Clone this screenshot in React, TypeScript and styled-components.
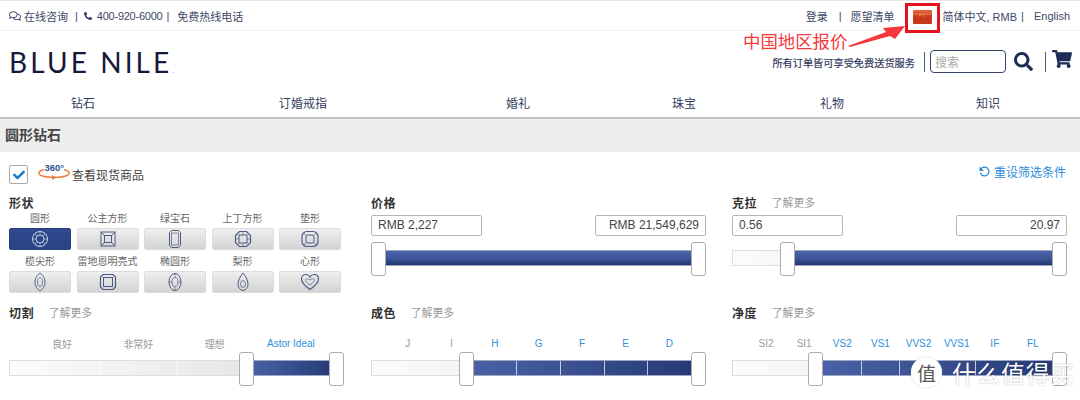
import React from 'react';
import styled, { createGlobalStyle } from 'styled-components';
import { FaPhoneAlt, FaSearch, FaShoppingCart, FaCheck, FaRegComments } from 'react-icons/fa';
import { MdRefresh } from 'react-icons/md';

const Global = createGlobalStyle`
  html, body { margin: 0; padding: 0; background: #fff; overflow: hidden; }
  body { font-family: "Liberation Sans", "Noto Sans CJK SC", sans-serif; color: #333; }
  * { box-sizing: border-box; }
`;
const Page = styled.div`position: relative; width: 1080px; height: 400px; overflow: hidden; border-top: 1px solid #e8e8e8;`;

const TopBar = styled.div`
  height: 30px; display: flex; align-items: center; justify-content: space-between;
  padding: 1px 10px 0 9px; border-bottom: 1px solid #f0f0f0; font-size: 11px; color: #3d4766;
`;
const TopGroup = styled.div`display: flex; align-items: center;`;
const TopText = styled.span<{ $ml?: number; $tight?: boolean }>`
  margin-left: ${p => p.$ml ?? 0}px; white-space: nowrap; display: inline-flex; align-items: center;
  letter-spacing: ${p => p.$tight ? '-0.25px' : '0'};
`;
const FlagSlot = styled.span`width: 19px; height: 13px; margin: 0 11px 0 18px; display: block;`;

const BrandRow = styled.div`height: 57px; display: flex; align-items: center; padding: 4px 8px 0 9px;`;
const Logo = styled.div`
  font-family: "Lato", "Liberation Sans", sans-serif; font-weight: 400; font-size: 28px; letter-spacing: 3.1px;
  color: #16193a; line-height: 1; white-space: nowrap;
  small { font-size: 6px; letter-spacing: 0; color: #777; }
`;
const BrandRight = styled.div`margin-left: auto; display: flex; align-items: center; color: #1d2b55;`;
const Tagline = styled.span`font-size: 10.2px; color: #333c5e; -webkit-text-stroke: 0.2px #333c5e; white-space: nowrap; margin-top: 1px;`;
const VRule = styled.span<{ $ml: number; $mr: number }>`width: 1px; height: 20px; background: #555e78; margin: 0 ${p => p.$mr}px 0 ${p => p.$ml}px;`;
const SearchBox = styled.div`
  width: 76px; height: 23px; border: 1px solid #34426e; border-radius: 4px; font-size: 12px; color: #aaa;
  padding: 0 0 0 4px; display: flex; align-items: center;
`;

const Nav = styled.nav`
  width: 1084px; height: 29px; display: grid; grid-template-columns: 166px 274px 156px 176px 120px 192px;
  align-items: center; font-size: 12px; letter-spacing: 0.1px; color: #333e60;
`;
const NavItem = styled.span`text-align: center;`;

const TitleBar = styled.div`
  height: 35px; background: #eeeeee; border-top: 2px solid #c4c4c4; padding: 4px 5px 0;
  font-size: 14px; font-weight: 700; color: #444; line-height: 24px;
`;
const Main = styled.div`padding: 0 13px 0 9px;`;
const StockRow = styled.div`height: 41px; display: flex; align-items: center; justify-content: space-between; padding-top: 4px;`;
const StockLeft = styled.div`display: flex; align-items: center; font-size: 12px; color: #444;`;
const Check = styled.span`
  width: 19px; height: 19px; border: 1px solid #a9a9a9; border-radius: 2px; display: flex; align-items: center; justify-content: center;
  color: #1479c9; font-size: 12px; margin-right: 9px;
`;
const Reset = styled.a`font-size: 12px; color: #2b8bd6; display: flex; align-items: center; gap: 2px; margin: 0 1px 7px 0;`;

const Grid = styled.div`display: grid; grid-template-columns: 362px 361px 335px; grid-template-rows: 110px 100px;`;
const Cell = styled.section`width: 335px; position: relative;`;
const Heading = styled.div`height: 18px; display: flex; align-items: center; font-size: 12px; color: #333;`;
const HeadTitle = styled.b`font-weight: 700; margin-right: 15px; letter-spacing: 0.4px;`;
const More = styled.span`font-size: 10.8px; color: #999;`;

const ShapeGrid = styled.div`display: grid; grid-template-columns: 62px 62px 62px 62px 62px; column-gap: 5.5px; width: 331px;`;
const ShapeCol = styled.div`display: flex; flex-direction: column; align-items: center; height: 43px;`;
const ShapeLabel = styled.span`height: 17px; line-height: 16px; font-size: 10px; color: #666; white-space: nowrap;`;
const ShapeBtn = styled.div<{ $on?: boolean }>`
  width: 100%; height: 22px; border-radius: 2px; display: flex; align-items: center; justify-content: center;
  background: ${p => p.$on ? 'linear-gradient(#2e4a90, #2b4285)' : 'linear-gradient(#efefef, #d3d3d3)'};
  border: 1px solid ${p => p.$on ? '#2a3f7d' : '#dcdcdc'};
`;

const Inputs = styled.div`display: flex; justify-content: space-between; margin-top: 4px;`;
const NumInput = styled.div<{ $right?: boolean }>`
  width: 111px; height: 21px; border: 1px solid #b5b5b5; border-radius: 2px; font-size: 12px; line-height: 19px; color: #444;
  padding: 0 6px; text-align: ${p => p.$right ? 'right' : 'left'}; white-space: nowrap;
`;
const Labels = styled.div`display: flex; padding: 0 15px; height: 18px; margin-top: 13px; align-items: center;`;
const Lbl = styled.span<{ $on?: boolean }>`flex: 1; text-align: center; font-size: 10px; color: ${p => p.$on ? '#2f8fd9' : '#9a9a9a'}; white-space: nowrap;`;

const Slider = styled.div<{ $top: number }>`position: relative; height: 34px; width: 335px; margin-top: ${p => p.$top}px;`;
const Track = styled.div`position: absolute; left: 0; right: 1px; top: 8px; height: 16px; border: 1px solid #dedede;
  background: linear-gradient(90deg, #fcfcfc, #e6e6e6 72%);`;
const Fill = styled.div<{ $mode: 'v' | 'h' }>`
  position: absolute; top: 8px; height: 16px; border: 1px solid #9ea7c0; border-width: 1px 0;
  background: ${p => p.$mode === 'v' ? 'linear-gradient(#4a63a8, #3c5599 55%, #22356f)' : 'linear-gradient(90deg, #4b62a8, #253a75)'};
`;
const Tick = styled.i`position: absolute; top: 9px; width: 1px; height: 14px; background: rgba(255,255,255,.7);`;
const Handle = styled.div`
  position: absolute; top: 0; width: 15px; height: 34px; background: #fff; border: 1px solid #acacac; border-radius: 3px;
`;

const RedBox = styled.div`position: absolute; left: 905px; top: 2px; width: 35px; height: 30px; border: 3px solid #e3141c;`;
const Callout = styled.div`position: absolute; left: 743px; top: 31px; font-size: 17.4px; line-height: 20px; color: #f5383c; white-space: nowrap;`;
const ArrowSvg = styled.svg`position: absolute; left: 846px; top: 22px;`;
const FlagSvg = styled.svg`position: absolute; left: 913px; top: 9px;`;
const Water = styled.div`position: absolute; left: 911px; top: 354px; display: flex; align-items: center; color: #fff;`;
const WaterBadge = styled.span`
  width: 31px; height: 31px; border-radius: 50%; background: #fff; color: #555; font-size: 19px; display: flex; align-items: center; justify-content: center;
  box-shadow: 0 0 1px #bbb; margin-right: 10px;
`;
const WaterText = styled.span`font-size: 24px; letter-spacing: 0.5px; text-shadow: 0 0 2px rgba(0,0,0,.3); white-space: nowrap;`;

type ShapeKind = 'round' | 'princess' | 'emerald' | 'asscher' | 'cushion' | 'marquise' | 'radiant' | 'oval' | 'pear' | 'heart';
const Gem = ({ kind, on }: { kind: ShapeKind; on?: boolean }) => {
  const c = on ? '#cfd6e8' : '#4d5a85';
  const common = { fill: 'none', stroke: c, strokeWidth: 1 } as const;
  const shapes: Record<ShapeKind, React.ReactNode> = {
    round: <><circle cx="10" cy="10" r="7.5" {...common} /><circle cx="10" cy="10" r="4" {...common} /><path d="M10 2.5 10 6M2.5 10H6M14 10h3.5M10 14v3.5M4.7 4.7l2.5 2.5M15.3 4.7l-2.5 2.5M4.7 15.3l2.5-2.5M15.3 15.3l-2.5-2.5" {...common} strokeWidth={0.6} /></>,
    princess: <><rect x="3" y="3" width="14" height="14" {...common} /><rect x="6.5" y="6.5" width="7" height="7" {...common} /><path d="M3 3l3.5 3.5M17 3l-3.5 3.5M3 17l3.5-3.5M17 17l-3.5-3.5" {...common} /></>,
    emerald: <><path d="M6.5 1.5h7l2 2v13l-2 2h-7l-2-2v-13z" {...common} /><rect x="6.5" y="4" width="7" height="12" {...common} strokeWidth={0.7} /></>,
    asscher: <><path d="M6.5 2.5h7l4 4v7l-4 4h-7l-4-4v-7z" {...common} strokeWidth={1.2} /><rect x="6" y="6" width="8" height="8" {...common} /><path d="M2.5 10h3.5M14 10h3.5M10 2.5V6M10 14v3.5" {...common} strokeWidth={0.6} /></>,
    cushion: <><rect x="2" y="2.5" width="16" height="15" rx="5" {...common} strokeWidth={1.2} /><rect x="6" y="6" width="8" height="8" rx="2" {...common} /><path d="M4 4.5l2.5 2M16 4.5l-2.5 2M4 15.5l2.5-2M16 15.5l-2.5-2" {...common} strokeWidth={0.7} /></>,
    marquise: <><path d="M10 1c4 3 5 6 5 9s-1 6-5 9c-4-3-5-6-5-9s1-6 5-9z" {...common} /><ellipse cx="10" cy="10" rx="2.5" ry="4.5" {...common} strokeWidth={0.7} /></>,
    radiant: <><path d="M5 2.5h10l2.500 2.500v10l-2.500 2.500H5l-2.500-2.500V5z" {...common} strokeWidth={1.2} /><rect x="5.500" y="5.500" width="9" height="9" {...common} /></>,
    oval: <><ellipse cx="10" cy="10" rx="6" ry="8.500" {...common} /><ellipse cx="10" cy="10" rx="3" ry="4.500" {...common} strokeWidth={0.7} /><path d="M10 1.500v4M10 14.500v4M4 10h3M13 10h3" {...common} strokeWidth={0.6} /></>,
    pear: <><path d="M10 1c2.500 3 5 7 5 11a5 6.500 0 0 1-10 0C5 8 7.500 4 10 1z" {...common} /><ellipse cx="10" cy="12" rx="2.500" ry="3.500" {...common} strokeWidth={0.7} /></>,
    heart: <><path d="M10 17.500C5 14 1.500 10.500 1.500 7 1.500 4 3.500 2.500 6 2.500c2 0 3.200 1 4 2.500.8-1.500 2-2.500 4-2.500 2.500 0 4.500 1.500 4.500 4.500 0 3.500-3.500 7-8.500 10.500z" {...common} strokeWidth={1.2} /><path d="M10 13C7 11 5.500 9 5.500 7.500 6.500 6.500 8.500 6.500 10 8c1.500-1.500 3.500-1.500 4.500-.5C14.500 9 13 11 10 13z" {...common} strokeWidth={0.7} /></>,
  };
  return <svg width="20" height="20" viewBox="0 0 20 20">{shapes[kind]}</svg>;
};

const shapes: { name: string; kind: ShapeKind; on?: boolean }[] = [
  { name: '圆形', kind: 'round', on: true }, { name: '公主方形', kind: 'princess' }, { name: '绿宝石', kind: 'emerald' },
  { name: '上丁方形', kind: 'asscher' }, { name: '垫形', kind: 'cushion' }, { name: '榄尖形', kind: 'marquise' },
  { name: '雷地恩明亮式', kind: 'radiant' }, { name: '椭圆形', kind: 'oval' }, { name: '梨形', kind: 'pear' }, { name: '心形', kind: 'heart' },
];

type SliderProps = { from: number; mode: 'v' | 'h'; top: number; ticks?: number[] };
const RangeSlider = ({ from, mode, top, ticks = [] }: SliderProps) => (
  <Slider $top={top}>
    <Track />
    <Fill $mode={mode} style={{ left: from + 10, width: 325 - from - 10 }} />
    {ticks.map(t => <Tick key={t} style={{ left: t }} />)}
    <Handle style={{ left: from }} />
    <Handle style={{ left: 320 }} />
  </Slider>
);

const Flag = () => (
  <FlagSvg width="19" height="14" viewBox="0 0 19 14">
    <defs><linearGradient id="fl" x1="0" y1="0" x2="0" y2="1"><stop offset="0" stopColor="#e4693f" /><stop offset=".5" stopColor="#c9381c" /><stop offset="1" stopColor="#c23a1e" /></linearGradient></defs>
    <rect width="19" height="14" rx="1" fill="url(#fl)" />
    <path d="M0 4h19" stroke="#f0a070" strokeWidth=".6" />
    <circle cx="7" cy="5" r=".8" fill="#f3c74c" /><circle cx="10" cy="4.500" r=".5" fill="#f3c74c" /><circle cx="11" cy="6" r=".5" fill="#f3c74c" />
  </FlagSvg>
);

export default function App() {
  return (
    <Page>
      <Global />
      <TopBar>
        <TopGroup>
          <FaRegComments size={12} style={{ marginRight: 3 }} color="#4a5470" />
          <TopText>在线咨询</TopText>
          <TopText $ml={7}>|</TopText>
          <FaPhoneAlt size={8} style={{ marginLeft: 6, marginRight: 5 }} color="#2d3a5f" />
          <TopText $tight>400-920-6000</TopText>
          <TopText $ml={4}>|</TopText>
          <TopText $ml={8}>免费热线电话</TopText>
        </TopGroup>
        <TopGroup>
          <TopText>登录</TopText>
          <TopText $ml={11}>|</TopText>
          <TopText $ml={9}>愿望清单</TopText>
          <FlagSlot />
          <TopText>简体中文, RMB</TopText>
          <TopText $ml={4}>|</TopText>
          <TopText $ml={10}>English</TopText>
        </TopGroup>
      </TopBar>

      <BrandRow>
        <Logo>BLUE NILE<small>.</small></Logo>
        <BrandRight>
          <Tagline>所有订单皆可享受免费送货服务</Tagline>
          <VRule $ml={9} $mr={5} />
          <SearchBox>搜索</SearchBox>
          <FaSearch size={19} style={{ marginLeft: 8 }} />
          <VRule $ml={12} $mr={6} />
          <FaShoppingCart size={20} style={{ marginTop: -6 }} />
        </BrandRight>
      </BrandRow>

      <Nav>
        {['钻石', '订婚戒指', '婚礼', '珠宝', '礼物', '知识'].map(n => <NavItem key={n}>{n}</NavItem>)}
      </Nav>

      <TitleBar>圆形钻石</TitleBar>

      <Main>
        <StockRow>
          <StockLeft>
            <Check><FaCheck /></Check>
            <svg width="34" height="20" viewBox="0 0 34 20" style={{ marginRight: 1, marginTop: -5 }}>
              <path d="M7 7.500C1.500 9 0 11.500 4 13.500c6 2.500 21 2.500 26 0 4-2 2.500-4.500-3-6" fill="none" stroke="#ee7f3a" strokeWidth="1.400" />
              <path d="M15 13l5 2.500-5 2.500z" fill="#ee7f3a" />
              <text x="7.500" y="9" fontSize="9.500" fontWeight="700" fill="#33508f" fontFamily="Liberation Sans">360°</text>
            </svg>
            查看现货商品
          </StockLeft>
          <Reset><MdRefresh size={15} style={{ transform: 'scaleX(-1)' }} />重设筛选条件</Reset>
        </StockRow>

        <Grid>
          <Cell>
            <Heading><HeadTitle>形状</HeadTitle></Heading>
            <ShapeGrid>
              {shapes.map(s => (
                <ShapeCol key={s.name}>
                  <ShapeLabel>{s.name}</ShapeLabel>
                  <ShapeBtn $on={s.on}><Gem kind={s.kind} on={s.on} /></ShapeBtn>
                </ShapeCol>
              ))}
            </ShapeGrid>
          </Cell>
          <Cell>
            <Heading><HeadTitle>价格</HeadTitle></Heading>
            <Inputs><NumInput>RMB 2,227</NumInput><NumInput $right>RMB 21,549,629</NumInput></Inputs>
            <RangeSlider from={0} mode="v" top={6} />
          </Cell>
          <Cell>
            <Heading><HeadTitle>克拉</HeadTitle><More>了解更多</More></Heading>
            <Inputs><NumInput>0.56</NumInput><NumInput $right>20.97</NumInput></Inputs>
            <RangeSlider from={48} mode="v" top={6} />
          </Cell>

          <Cell>
            <Heading><HeadTitle>切割</HeadTitle><More>了解更多</More></Heading>
            <Labels>
              <Lbl>良好</Lbl><Lbl>非常好</Lbl><Lbl>理想</Lbl><Lbl $on>Astor Ideal</Lbl>
            </Labels>
            <RangeSlider from={230} mode="h" top={0} ticks={[91, 168]} />
          </Cell>
          <Cell>
            <Heading><HeadTitle>成色</HeadTitle><More>了解更多</More></Heading>
            <Labels>
              <Lbl>J</Lbl><Lbl>I</Lbl><Lbl $on>H</Lbl><Lbl $on>G</Lbl><Lbl $on>F</Lbl><Lbl $on>E</Lbl><Lbl $on>D</Lbl>
            </Labels>
            <RangeSlider from={88} mode="h" top={0} ticks={[59, 145, 189, 233, 276]} />
          </Cell>
          <Cell>
            <Heading><HeadTitle>净度</HeadTitle><More>了解更多</More></Heading>
            <Labels>
              <Lbl>SI2</Lbl><Lbl>SI1</Lbl><Lbl $on>VS2</Lbl><Lbl $on>VS1</Lbl><Lbl $on>VVS2</Lbl><Lbl $on>VVS1</Lbl><Lbl $on>IF</Lbl><Lbl $on>FL</Lbl>
            </Labels>
            <RangeSlider from={76} mode="h" top={0} ticks={[54, 129, 167, 205, 243]} />
          </Cell>
        </Grid>
      </Main>

      <RedBox />
      <Flag />
      <Callout>中国地区报价</Callout>
      <ArrowSvg width="60" height="30" viewBox="0 0 60 30">
        <path d="M2 23 L40 9 L37 5 L59 3 L49 16 L44 13 L4 24z" fill="#f5383c" />
      </ArrowSvg>
      <Water>
        <WaterBadge>值</WaterBadge>
        <WaterText>什么值得买</WaterText>
      </Water>
    </Page>
  );
}
